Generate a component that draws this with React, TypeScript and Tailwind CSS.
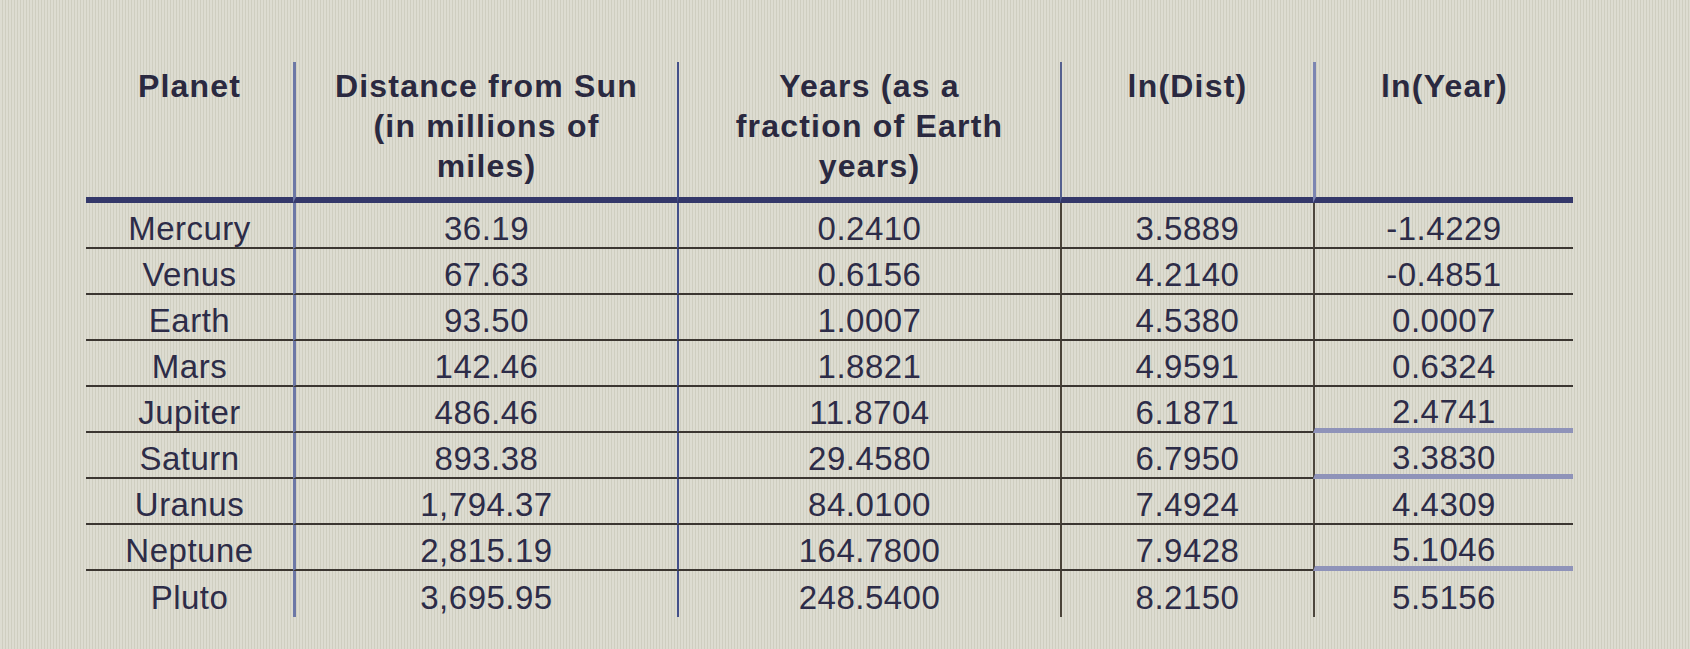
import React from "react";

const headers: React.ReactNode[] = [
  "Planet",
  <>Distance from Sun<br />(in millions of<br />miles)</>,
  <>Years (as a<br />fraction of Earth<br />years)</>,
  "ln(Dist)",
  "ln(Year)",
];

const rows = [
  ["Mercury", "36.19", "0.2410", "3.5889", "-1.4229"],
  ["Venus", "67.63", "0.6156", "4.2140", "-0.4851"],
  ["Earth", "93.50", "1.0007", "4.5380", "0.0007"],
  ["Mars", "142.46", "1.8821", "4.9591", "0.6324"],
  ["Jupiter", "486.46", "11.8704", "6.1871", "2.4741"],
  ["Saturn", "893.38", "29.4580", "6.7950", "3.3830"],
  ["Uranus", "1,794.37", "84.0100", "7.4924", "4.4309"],
  ["Neptune", "2,815.19", "164.7800", "7.9428", "5.1046"],
  ["Pluto", "3,695.95", "248.5400", "8.2150", "5.5156"],
];

// vertical rule left of each column (header part / body part)
const headLeft = ["", "border-l-[3px] border-l-[#6d78a6]", "border-l-2 border-l-[#44508a]", "border-l-2 border-l-[#55608f]", "border-l-[3px] border-l-[#7d86b2]"];
const bodyLeft = ["", "border-l-[3px] border-l-[#6d78a6]", "border-l-2 border-l-[#44508a]", "border-l-2 border-l-[#4a4338]", "border-l-2 border-l-[#4d463c]"];

// the last column has a few pale, thicker separators
const paleRows = [4, 5, 7];

export default function App() {
  return (
    <div className="w-[1690px] h-[649px] overflow-hidden bg-[#d7d6c9] bg-[repeating-linear-gradient(90deg,#dddcd1_0px,#dddcd1_2px,#cfcec0_2px,#cfcec0_3px)] text-[#2d2c48] font-['Liberation_Sans',Arial,sans-serif]">
      <div className="ml-[86px] mt-[62px] grid w-[1487px] grid-cols-[207px_384px_383px_253px_260px]">
        {headers.map((h, i) => (
          <div
            key={i}
            className={`h-[141px] border-b-[6px] border-b-[#34386a] pt-[4px] text-center text-[32px] leading-[40px] font-bold tracking-[1.2px] text-[#2a2940] ${headLeft[i]}`}
          >
            {h}
          </div>
        ))}

        {rows.map((r, ri) =>
          r.map((c, ci) => {
            const last = ri === rows.length - 1;
            const pale = ci === 4 && paleRows.includes(ri);
            const bottom = last
              ? ""
              : pale
              ? "border-b-[5px] border-b-[#8f93b9]"
              : "border-b-2 border-b-[#3b3631]";
            return (
              <div
                key={`${ri}-${ci}`}
                className={`flex h-[46px] items-center justify-center pt-2 text-[33px] tracking-[0.5px] ${bottom} ${bodyLeft[ci]}`}
              >
                {c}
              </div>
            );
          })
        )}
      </div>
    </div>
  );
}
